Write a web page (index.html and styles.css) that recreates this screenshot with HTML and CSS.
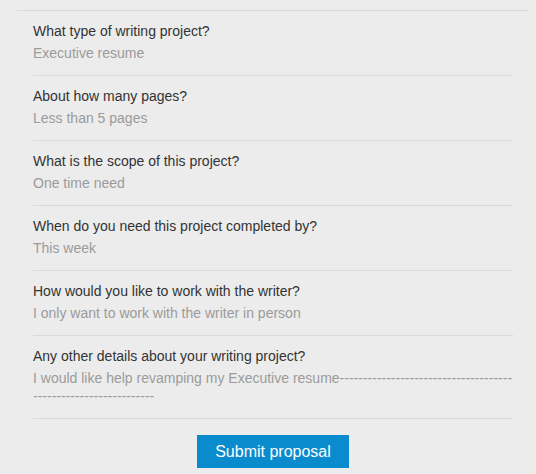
FILE: index.html
```html
<!DOCTYPE html>
<html>
<head>
<meta charset="utf-8">
<link rel="stylesheet" href="styles.css">
</head>
<body>
<div class="page">
  <div class="panel">
    <div class="list">
      <div class="item">
        <div class="q">What type of writing project?</div>
        <div class="a">Executive resume</div>
      </div>
      <div class="item">
        <div class="q">About how many pages?</div>
        <div class="a">Less than 5 pages</div>
      </div>
      <div class="item">
        <div class="q">What is the scope of this project?</div>
        <div class="a">One time need</div>
      </div>
      <div class="item">
        <div class="q">When do you need this project completed by?</div>
        <div class="a">This week</div>
      </div>
      <div class="item">
        <div class="q">How would you like to work with the writer?</div>
        <div class="a">I only want to work with the writer in person</div>
      </div>
      <div class="item">
        <div class="q">Any other details about your writing project?</div>
        <div class="a long">I would like help revamping my Executive resume---------------------------------------------------------------</div>
      </div>
    </div>
    <div class="actions">
      <button class="submit">Submit proposal</button>
    </div>
  </div>
</div>
</body>
</html>
```
FILE: styles.css
```css
html, body {
  margin: 0;
  padding: 0;
}
body {
  background: #ececec;
  font-family: "Liberation Sans", Arial, Helvetica, sans-serif;
  width: 536px;
  height: 474px;
  overflow: hidden;
}
.page {
  padding-top: 10px;
}
.panel {
  margin: 0 7px 0 17px;
  border-top: 1px solid #d9d9d9;
  padding: 0 16px;
}
.item {
  padding: 10px 0 13px;
  border-bottom: 1px solid #d9d9d9;
}
.q {
  font-size: 14px;
  line-height: 20px;
  color: #333333;
}
.a {
  margin-top: 3px;
  font-size: 14px;
  line-height: 18px;
  color: #9b9b9b;
}
.long {
  word-break: break-all;
}
.actions {
  display: flex;
  justify-content: center;
  padding-top: 16px;
}
.submit {
  width: 152px;
  height: 33px;
  border: none;
  background: #0a8bcd;
  color: #ffffff;
  font-family: "Liberation Sans", Arial, Helvetica, sans-serif;
  font-size: 16px;
  padding: 0;
}
```
